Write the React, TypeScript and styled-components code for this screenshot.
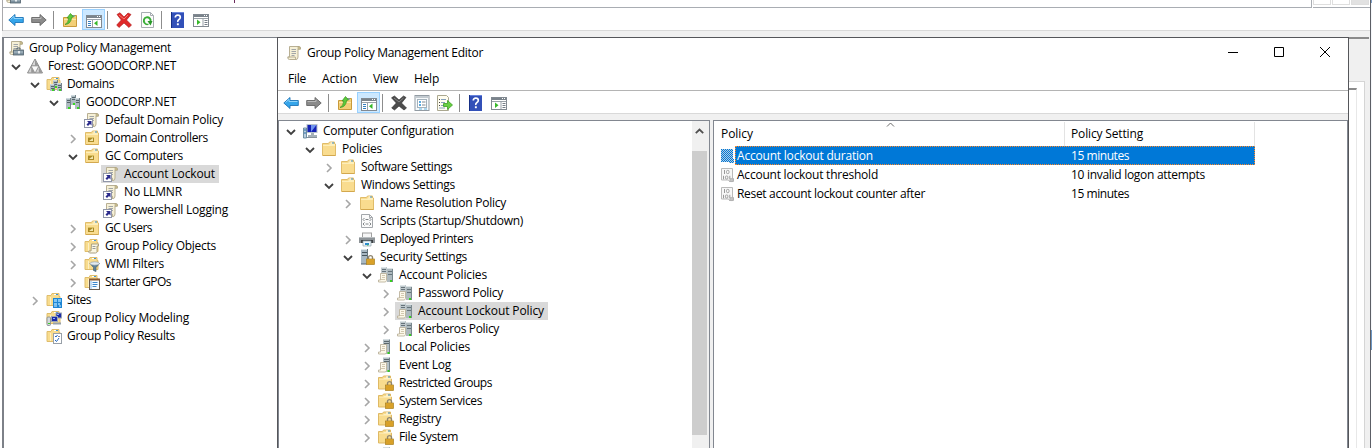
import React, { useLayoutEffect, useRef, useState } from "react";
import styled, { createGlobalStyle, css } from "styled-components";

const GlobalStyle = createGlobalStyle`
  * { box-sizing: border-box; }
  html, body { margin: 0; padding: 0; overflow: hidden; background: #fff; }
  body { font: 12px/18px "Open Sans", "Liberation Sans", sans-serif; color: #000; }
  svg { display: block; flex: none; }
`;

/* ---------- text ---------- */

const Label = styled.span`
  display: inline-block;
  white-space: nowrap;
  flex: none;
`;

/* Text tracked so that it takes the given width in pixels. */
function Text({ children, width }: { children: string; width: number }) {
  const ref = useRef<HTMLSpanElement>(null);
  const [spacing, setSpacing] = useState(0);
  useLayoutEffect(() => {
    const natural = ref.current!.getBoundingClientRect().width;
    setSpacing((width - natural) / children.length);
  }, [children, width]);
  return (
    <Label ref={ref} style={{ letterSpacing: `${spacing}px` }}>
      {children}
    </Label>
  );
}

/* ---------- icons ---------- */

const Svg = ({ children }: { children: React.ReactNode }) => (
  <svg width="16" height="16" viewBox="0 0 16 16">
    {children}
  </svg>
);

const FolderShape = () => (
  <>
    <path d="M1.5 2.5h6l1-1.500h5v2h1v11.500h-13z" fill="#f9dc8f" stroke="#e0bc69" />
    <path d="M2 4h6l1-1h5v2h-12z" fill="#fdeeb9" />
    <path d="M9.5 2h2" stroke="#fff" />
    <path d="M11 2h2" stroke="#3b95dd" />
    <path d="M2 14.5h12.5" stroke="#d3a84e" />
  </>
);
const SmallFolder = () => (
  <>
    <path d="M1 3.5h4l1-2h7v3h1v9H1z" fill="#f8dc8e" stroke="#dfbd6c" />
    <path d="M4.5 5v8" stroke="#fdf0c4" />
    <path d="M8 2.5h2" stroke="#fff" />
    <path d="M10 2.5h2" stroke="#3b95dd" />
  </>
);
const Tower = ({ x, y, h = 10 }: { x: number; y: number; h?: number }) => (
  <>
    <rect x={x} y={y} width="5" height={h} fill="#afbcc2" />
    <path d={`M${x} ${y + 0.5}h5`} stroke="#cfdade" />
    <path d={`M${x + 4.5} ${y}v${h}`} stroke="#75848b" />
    <path d={`M${x + 1} ${y + 2.5}h3M${x + 1} ${y + 4.5}h3`} stroke="#56656b" />
    <rect x={x + 2} y={y + h - 2} width="2" height="2" fill="#39d820" />
  </>
);
const Lock = () => (
  <>
    <path d="M9.5 10V8.6a2 2 0 0 1 4 0V10" fill="none" stroke="#8f8672" strokeWidth="1.4" />
    <rect x="7.5" y="10" width="8" height="5.5" fill="#e8b030" stroke="#a67e20" strokeWidth=".7" />
    <path d="M8 12h7M8 14h7" stroke="#c18a20" strokeWidth=".8" />
  </>
);
const ScrollShape = () => (
  <>
    <path d="M3.5 1.5h9.5q2 0 1.5 2.5H12v8q0 2.500-2 2.500H3.500q-2 0-1.700-2.500H3.500z" fill="#f6f0d6" stroke="#b8af93" />
    <path d="M12 1.5q2.500 0 2.300 2.700H12z" fill="#d8c993" stroke="#a59c7c" strokeWidth=".6" />
    <path d="M1.800 12h7.500q0 2.500 1 2.500" fill="none" stroke="#b8af93" />
    <path d="M5.500 4.500h4.500M5.500 6.500h4.500M5.500 8.500h4.500M5.500 10.500h3" stroke="#a2a6a8" />
  </>
);
const MiniScroll = () => (
  <>
    <path d="M7.500 6h7v2H13v5.500q0 1.500-1.500 1.500h-6q-1-.500-.700-2H7z" fill="#fbf6e1" stroke="#aaa184" />
    <path d="M8.500 8.500h3M8.500 10.500h3" stroke="#979b9c" />
  </>
);

type IconName = keyof typeof icons;
const icons = {
  scroll: () => <Svg><ScrollShape /></Svg>,
  gpm: () => (
    <Svg>
      <ScrollShape />
      <rect x="5.500" y="10" width="10" height="5" fill="#7d919f" stroke="#52626d" strokeWidth=".8" />
      <path d="M9 9.500V8h3v1.500" stroke="#52626d" fill="none" />
      <path d="M6 12h9" stroke="#b3c3cc" />
      <rect x="10" y="11" width="2" height="2.500" fill="#e8edf0" />
    </Svg>
  ),
  forest: () => (
    <Svg>
      <path d="M8 1l3.800 7H4.200z" fill="#d8d8d8" stroke="#777" strokeWidth=".8" />
      <path d="M4.200 8L8 15H.500zM11.800 8l3.700 7H8z" fill="#d2d2d2" stroke="#777" strokeWidth=".8" />
      <path d="M4.200 8h7.600L8 15z" fill="#fafafa" stroke="#8a8a8a" strokeWidth=".6" />
      <path d="M8 1.500v6.300h3.500zM4.200 8.500v6.200h3.300zM11.800 8.500v6.200h3.300z" fill="#989898" />
    </Svg>
  ),
  domains: () => <Svg><SmallFolder /><Tower x={7} y={4} h={8} /><Tower x={4} y={8} h={7} /><Tower x={11} y={7} h={8} /></Svg>,
  domain: () => <Svg><Tower x={6} y={1} /><Tower x={1} y={4} h={11} /><Tower x={10} y={4} h={11} /></Svg>,
  link: () => (
    <Svg>
      <ScrollShape />
      <rect x=".5" y="7.500" width="8" height="8" fill="#fff" stroke="#9096a8" />
      <path d="M3 9h4.500v4.500L6 12l-2 2-1.500-1.500 2-2z" fill="#2a2a8c" />
    </Svg>
  ),
  ou: () => (
    <Svg>
      <FolderShape />
      <rect x="4" y="7" width="6" height="5" fill="#ab8a25" />
      <path d="M5 11l4-3v3z" fill="#f0e5ae" />
      <path d="M4 7.500h6" stroke="#d7bf62" />
    </Svg>
  ),
  gpos: () => <Svg><SmallFolder /><MiniScroll /></Svg>,
  wmi: () => (
    <Svg>
      <SmallFolder />
      <path d="M6 7.500h9.500l-3.500 4v4l-2.500-1v-3z" fill="#5d8198" stroke="#4c6270" strokeWidth=".7" />
      <ellipse cx="10.700" cy="7.500" rx="4.700" ry="1.700" fill="#e2eaf0" stroke="#8796a0" strokeWidth=".6" />
    </Svg>
  ),
  starter: () => (
    <Svg>
      <SmallFolder />
      <rect x="5.500" y="5.500" width="10" height="10" fill="#f7fbff" stroke="#6a5c50" />
      <path d="M5 5.500h11" stroke="#8c5a34" strokeWidth="2" />
      <path d="M8.500 8.500h5M8.500 10.500h5M8.500 12.500h4" stroke="#3c86cc" />
      <path d="M7 7v8" stroke="#8db9e2" />
    </Svg>
  ),
  sites: () => (
    <Svg>
      <SmallFolder />
      <rect x="7" y="6" width="9" height="10" fill="#1e86d4" />
      <path d="M8 7h3v3H8zM12 7h3v3h-3zM8 11h3v2H8zM12 11h2v2h-2z" fill="#7fc6f5" />
      <path d="M13 14h2M8 14h3" stroke="#d7efff" />
    </Svg>
  ),
  modeling: () => (
    <Svg>
      <SmallFolder />
      <rect x="1" y="7" width="3.500" height="8.500" rx="1" fill="#d4d9dc" stroke="#7c8488" strokeWidth=".8" />
      <rect x="10" y="3" width="5.500" height="5" fill="#1b2aa8" stroke="#9ba5b5" />
      <rect x="5.500" y="6.500" width="6" height="5" fill="#1b2aa8" stroke="#9ba5b5" />
      <path d="M7 13.500h8" stroke="#98a1a8" strokeWidth="2" />
      <path d="M11 4.500h2M7 8.500h2" stroke="#8fb0f8" />
      <path d="M2 13.500h2" stroke="#3bcf2a" />
    </Svg>
  ),
  results: () => (
    <Svg>
      <SmallFolder />
      <rect x="7.500" y="5.500" width="8" height="10" fill="#fff" stroke="#98a0a8" />
      <path d="M9 8l1 1 1.500-2M9 12l1.500 1.500L13 10" stroke="#2468c2" fill="none" />
      <path d="M12 8.500h2" stroke="#889" />
    </Svg>
  ),
  folder: () => <Svg><FolderShape /></Svg>,
  computer: () => (
    <Svg>
      <rect x="5" y="1.500" width="10" height="8" fill="#1420b4" stroke="#b9c3cc" />
      <path d="M9 9V2h5.500z" fill="#6f93ee" />
      <path d="M9 10h3v2h3v2H6v-2h3z" fill="#a4b0b8" />
      <path d="M1.500 5h3v10h-3z" fill="#bccfdf" stroke="#54788f" strokeWidth=".8" />
      <path d="M2 7h2M2 10h2" stroke="#2a6ca5" />
      <path d="M5 14.500h10" stroke="#87929a" />
    </Svg>
  ),
  script: () => (
    <Svg>
      <path d="M2.500 1.500h8l3 3v10h-11z" fill="#fbfbfb" stroke="#a3a7ab" />
      <path d="M10.500 1.500v3h3" fill="none" stroke="#a3a7ab" />
      <path d="M5.500 5L4 6.500 5.500 8M10.500 5L12 6.500 10.500 8M6.500 6.500h3M5.500 9.500L4 11l1.500 1.500M10.500 9.500L12 11l-1.500 1.500M6.500 11h3" fill="none" stroke="#73787c" strokeWidth=".9" />
    </Svg>
  ),
  printer: () => (
    <Svg>
      <rect x="3.500" y="2" width="9" height="5" fill="#f6f6f6" stroke="#a0a0a0" />
      <path d="M0 6h16v6H0z" fill="#8d9397" />
      <path d="M0 6.500h16" stroke="#b8bdc0" />
      <path d="M2 9h12v3H2z" fill="#3c4043" />
      <path d="M4 10h8v5H4z" fill="#eef6fb" stroke="#8da0ab" strokeWidth=".7" />
      <path d="M6 13h4" stroke="#2a8ad0" strokeWidth="2" />
      <path d="M8 14h1.500" stroke="#3cb64c" />
    </Svg>
  ),
  security: () => (
    <Svg>
      <rect x="2" y="0" width="7" height="15" fill="#a8b8c3" />
      <path d="M2 .5h7" stroke="#dbe5ea" />
      <path d="M3 3.500h5M3 6.500h5" stroke="#45545d" />
      <path d="M8.500 0v15" stroke="#67777f" />
      <path d="M2 15h6" stroke="#54636b" />
      <Lock />
    </Svg>
  ),
  policies: () => (
    <Svg>
      <rect x="3" y="0" width="6" height="13" fill="#c0c9cd" />
      <rect x="9" y="1" width="6" height="14" fill="#adb9be" />
      <path d="M3 .5h5M9 1.500h6" stroke="#dde4e6" />
      <path d="M4 2.500h4M4 4.500h4M10 4.500h4M10 7.500h4" stroke="#66737a" />
      <path d="M14.500 2v13" stroke="#7a888e" />
      <path d="M12 13h2v2h-2z" fill="#35d11c" />
      <path d="M2.500 6.500h6v7l-1 1.500h-7v-2h2z" fill="#fcf8ea" stroke="#b5ab93" strokeWidth=".8" />
      <path d="M4 8.500h3M4 10.500h3M3 12.500h4" stroke="#c6bb9f" strokeWidth=".8" />
    </Svg>
  ),
  policy: () => (
    <Svg>
      <rect x="5" y="0" width="7" height="15" fill="#b4c0c5" />
      <path d="M5 .5h6" stroke="#d6dee1" />
      <path d="M6 2.500h5M6 4.500h5" stroke="#5a676d" />
      <path d="M11.500 1v14" stroke="#75848a" />
      <path d="M9.500 13h2v2h-2z" fill="#35d11c" />
      <path d="M2.500 5.500h6v8l-1 1.500h-7v-2h2z" fill="#fcf8ea" stroke="#b5ab93" strokeWidth=".8" />
      <path d="M4 7.500h3M4 9.500h3M3 11.500h4" stroke="#c6bb9f" strokeWidth=".8" />
    </Svg>
  ),
  locked: () => (
    <Svg>
      <path d="M.5 2.500h4l1-1.500h7v3h1v10H.5z" fill="#f8dc8e" stroke="#dfb964" />
      <path d="M1 4h4l1-1h7v1.500H1z" fill="#fdf0c4" />
      <path d="M8 2h2" stroke="#fff" />
      <path d="M10 2h2" stroke="#3b95dd" />
      <Lock />
    </Svg>
  ),
  back: () => (
    <Svg>
      <path d="M.8 8L7 2.500v3h8.300v5H7v3z" fill="#35a5ea" stroke="#1d74b8" strokeWidth=".9" />
      <path d="M2.500 7.500L6 4.300v2.200h8.500" fill="none" stroke="#8fd3fa" />
    </Svg>
  ),
  forward: () => (
    <Svg>
      <path d="M15.200 8L9 2.500v3H.7v5H9v3z" fill="#8b8b8b" stroke="#666" strokeWidth=".9" />
      <path d="M1.500 6.500H10V4.600" fill="none" stroke="#b9b9b9" />
    </Svg>
  ),
  up: () => (
    <Svg>
      <path d="M1.500 5.500h6l1-2h6v11h-13z" fill="#f3cf77" stroke="#c99a3a" />
      <path d="M2 7.500h12" stroke="#fbe6a6" />
      <path d="M10 4h3" stroke="#4c9fe0" />
      <path d="M3 12.500q3.500-1.500 3.800-6.500H5l3.500-4.500L11.500 5 9.600 5.400Q9 12 3 12.500z" fill="#5ccb3c" stroke="#37931f" strokeWidth=".7" />
    </Svg>
  ),
  tree: () => (
    <Svg>
      <rect x=".5" y="2.500" width="15" height="12" fill="#fff" stroke="#818991" />
      <path d="M1 4h14" stroke="#7a838b" strokeWidth="2" />
      <path d="M11 3.500h1M13 3.500h1" stroke="#fff" />
      <path d="M1 6.500h14M6.500 6v8" stroke="#9aa2a9" />
      <path d="M2 8.500h3M2 10.500h3M2 12.500h3" stroke="#337fc0" />
      <path d="M11.500 7.500v5.500L8 10.200z" fill="#37b82a" />
    </Svg>
  ),
  action: () => (
    <Svg>
      <rect x=".5" y="2.500" width="15" height="12" fill="#fff" stroke="#818991" />
      <path d="M1 4h14" stroke="#7a838b" strokeWidth="2" />
      <path d="M11 3.500h1M13 3.500h1" stroke="#fff" />
      <path d="M1 6.500h14M10 6v8" stroke="#9aa2a9" />
      <path d="M11.500 8.500h3M11.500 10.500h3M11.500 12.500h3" stroke="#747d86" />
      <path d="M4 7.500v5.500l3.500-2.800z" fill="#37b82a" />
    </Svg>
  ),
  remove: () => (
    <Svg>
      <path d="M1 2.500L4 .7 8 5l4-4 3 1.500L10.500 8l5 5-2.500 2.500L8 11l-5 4.500L.7 13 5.300 8z" fill="#e02a2a" stroke="#a81414" strokeWidth=".6" />
      <path d="M3 3l5 4 4-4" fill="none" stroke="#f27a70" />
    </Svg>
  ),
  removeDark: () => (
    <Svg>
      <path d="M.5 2.800L3.500 1 8 5l4.500-4L15 2.500 10.500 8l5 5-2.500 2L8 11l-4.500 4L.7 13 5.300 8z" fill="#4c4c4c" stroke="#292929" strokeWidth=".6" />
      <path d="M3 3l5 4 4.500-4" fill="none" stroke="#858585" />
    </Svg>
  ),
  refresh: () => (
    <Svg>
      <path d="M2.500.5h9l3 3v12h-12z" fill="#fcfcfc" stroke="#a7adb2" />
      <path d="M11.500.5v3h3" fill="none" stroke="#a7adb2" />
      <path d="M5.800 11A3.400 3.400 0 1 1 11.500 9.500" fill="none" stroke="#38ad35" strokeWidth="1.900" />
      <path d="M8.500 9h5l-2 4.500z" fill="#279626" />
      <path d="M5.500 11q1.500 2 4 1.200" fill="none" stroke="#38ad35" strokeWidth="1.400" />
    </Svg>
  ),
  props: () => (
    <Svg>
      <rect x="1" y=".5" width="14" height="15" fill="#f6f9fb" stroke="#929ba3" />
      <path d="M2 2h12" stroke="#c3cbd1" strokeWidth="2" />
      <rect x="3.500" y="4.500" width="9" height="8" fill="#fff" stroke="#a4b2bc" />
      <path d="M5 7h2M5 10h2" stroke="#268fd6" strokeWidth="1.600" />
      <path d="M8 7h3.500M8 10h3.500" stroke="#7e8991" />
      <path d="M5 14h3M10 14h3" stroke="#65b5e0" />
    </Svg>
  ),
  export: () => (
    <Svg>
      <path d="M.5.5h9l2 2v13H.5z" fill="#fffdf0" stroke="#aaa78f" />
      <path d="M2 4.500h1M2 7.500h1M2 10.500h1" stroke="#444" />
      <path d="M4 4.500h5M4 7.500h4M4 10.500h4M2 13h6" stroke="#86a1bd" />
      <path d="M6.500 8.500h4v-3L15.500 10l-5 4.500v-3h-4z" fill="#67cf42" stroke="#3b9d22" strokeWidth=".8" />
    </Svg>
  ),
  help: () => (
    <Svg>
      <rect x="1" y="0" width="13" height="16" fill="#3250b8" />
      <path d="M1.500 0v16" stroke="#162f86" />
      <path d="M2 .5h12" stroke="#6884dc" />
      <path d="M5.300 5.500q0-2.300 2.500-2.300t2.500 2.100q0 1.500-1.400 2.300T7.800 10" fill="none" stroke="#fff" strokeWidth="1.700" />
      <rect x="6.900" y="11.300" width="1.900" height="1.900" fill="#fff" />
    </Svg>
  ),
  setting: () => (
    <Svg>
      <path d="M1.500 1.500h11v10h1v3h-4l-1-1.500h-7z" fill="#f7f7f7" stroke="#b9b9b9" />
      <path d="M10.500 11.500q3-1 3 1.500t-4 1.500z" fill="#c4c4c4" stroke="#aaa" strokeWidth=".6" />
      <path d="M4.500 3v4M3.500 8.800v3.500M9.800 8.800v3.500" stroke="#9a9a9a" />
      <rect x="6.500" y="3.400" width="2.500" height="3.200" rx="1" fill="none" stroke="#9a9a9a" strokeWidth=".9" />
      <rect x="5.400" y="9" width="2.500" height="3" rx="1" fill="none" stroke="#9a9a9a" strokeWidth=".9" />
    </Svg>
  ),
  settingSelected: () => (
    <Svg>
      <defs>
        <pattern id="dither" width="2" height="2" patternUnits="userSpaceOnUse">
          <rect width="2" height="2" fill="#b4cde2" />
          <rect width="1" height="1" fill="#0078d7" />
          <rect x="1" y="1" width="1" height="1" fill="#0078d7" />
        </pattern>
      </defs>
      <path d="M1 1h12v10h1v4H9v-1H1z" fill="url(#dither)" shapeRendering="crispEdges" />
    </Svg>
  ),
};
const Icon = ({ name }: { name: IconName }) => icons[name]();

/* ---------- tree ---------- */

interface Node {
  level: number;
  icon: IconName;
  text?: string;
  width?: number;
  state?: "open" | "closed";
  selected?: boolean;
}

const TreeRow = styled.div<{ $level: number }>`
  display: flex;
  height: 18px;
  padding-left: ${(p) => p.$level * 19}px;
`;
const Twisty = styled.span`
  width: 19px;
  flex: none;
  display: flex;
  align-items: center;
  padding: 1px 0 0 5px;
`;
const Item = styled.span<{ $selected?: boolean }>`
  display: flex;
  align-items: center;
  gap: 5px;
  height: 18px;
  padding: 0 4px 0 2px;
  background: ${(p) => (p.$selected ? "#d9d9d9" : "transparent")};
`;

const Tree = ({ nodes }: { nodes: Node[] }) => (
  <>
    {nodes.map((n, i) => (
      <TreeRow key={i} $level={n.level}>
        <Twisty>
          {n.state === "open" && (
            <svg width="10" height="10" viewBox="0 0 10 10">
              <path d="M1 3l4 4 4-4" fill="none" stroke="#404040" strokeWidth="1.800" />
            </svg>
          )}
          {n.state === "closed" && (
            <svg width="10" height="10" viewBox="0 0 10 10">
              <path d="M3 1l4 4-4 4" fill="none" stroke="#a6a6a6" strokeWidth="1.600" />
            </svg>
          )}
        </Twisty>
        <Item $selected={n.selected}>
          <Icon name={n.icon} />
          {n.text && <Text width={n.width!}>{n.text}</Text>}
        </Item>
      </TreeRow>
    ))}
  </>
);

const consoleNodes: Node[] = [
  { level: 0, icon: "forest", text: "Forest: GOODCORP.NET", width: 128, state: "open" },
  { level: 1, icon: "domains", text: "Domains", width: 47, state: "open" },
  { level: 2, icon: "domain", text: "GOODCORP.NET", width: 90, state: "open" },
  { level: 3, icon: "link", text: "Default Domain Policy", width: 118 },
  { level: 3, icon: "ou", text: "Domain Controllers", width: 103, state: "closed" },
  { level: 3, icon: "ou", text: "GC Computers", width: 78, state: "open" },
  { level: 4, icon: "link", text: "Account Lockout", width: 91, selected: true },
  { level: 4, icon: "link", text: "No LLMNR", width: 58 },
  { level: 4, icon: "link", text: "Powershell Logging", width: 104 },
  { level: 3, icon: "ou", text: "GC Users", width: 47, state: "closed" },
  { level: 3, icon: "gpos", text: "Group Policy Objects", width: 111, state: "closed" },
  { level: 3, icon: "wmi", text: "WMI Filters", width: 59, state: "closed" },
  { level: 3, icon: "starter", text: "Starter GPOs", width: 66, state: "closed" },
  { level: 1, icon: "sites", text: "Sites", width: 24, state: "closed" },
  { level: 1, icon: "modeling", text: "Group Policy Modeling", width: 122 },
  { level: 1, icon: "results", text: "Group Policy Results", width: 108 },
];

const editorNodes: Node[] = [
  { level: 0, icon: "computer", text: "Computer Configuration", width: 131, state: "open" },
  { level: 1, icon: "folder", text: "Policies", width: 40, state: "open" },
  { level: 2, icon: "folder", text: "Software Settings", width: 91, state: "closed" },
  { level: 2, icon: "folder", text: "Windows Settings", width: 94, state: "open" },
  { level: 3, icon: "folder", text: "Name Resolution Policy", width: 126, state: "closed" },
  { level: 3, icon: "script", text: "Scripts (Startup/Shutdown)", width: 143 },
  { level: 3, icon: "printer", text: "Deployed Printers", width: 93, state: "closed" },
  { level: 3, icon: "security", text: "Security Settings", width: 87, state: "open" },
  { level: 4, icon: "policies", text: "Account Policies", width: 88, state: "open" },
  { level: 5, icon: "policies", text: "Password Policy", width: 85, state: "closed" },
  { level: 5, icon: "policies", text: "Account Lockout Policy", width: 126, state: "closed", selected: true },
  { level: 5, icon: "policies", text: "Kerberos Policy", width: 81, state: "closed" },
  { level: 4, icon: "policy", text: "Local Policies", width: 71, state: "closed" },
  { level: 4, icon: "policy", text: "Event Log", width: 52, state: "closed" },
  { level: 4, icon: "locked", text: "Restricted Groups", width: 93, state: "closed" },
  { level: 4, icon: "locked", text: "System Services", width: 83, state: "closed" },
  { level: 4, icon: "locked", text: "Registry", width: 42, state: "closed" },
  { level: 4, icon: "locked", text: "File System", width: 59, state: "closed" },
  { level: 4, icon: "policy" },
];

/* ---------- toolbar ---------- */

const ToolbarRow = styled.div`
  display: flex;
  height: 23px;
  padding-left: 2px;
  border-bottom: 1px solid #d9d9d9;
  background: #fff;
  flex: none;
`;
const ToolButton = styled.span<{ $on?: boolean }>`
  width: 23px;
  height: 22px;
  padding: 4px 0 0 3px;
  ${(p) =>
    p.$on &&
    css`
      padding: 3px 0 0 3px;
      margin-top: 1px;
      height: 21px;
      background: #cce8ff;
      border: 1px solid #99d1ff;
    `}
`;
const Separator = styled.span`
  width: 8px;
  height: 18px;
  margin-top: 3px;
  padding-left: 2px;
  &::before {
    content: "";
    display: block;
    width: 1px;
    height: 100%;
    background: #8d8d8d;
  }
`;
const Toolbar = ({ items }: { items: (IconName | "|")[] }) => (
  <ToolbarRow>
    {items.map((it, i) =>
      it === "|" ? (
        <Separator key={i} />
      ) : (
        <ToolButton key={i} $on={it === "tree"}>
          <Icon name={it} />
        </ToolButton>
      )
    )}
  </ToolbarRow>
);

/* ---------- console window ---------- */

const Desktop = styled.div`
  position: relative;
  display: flex;
  width: 1372px;
  height: 448px;
  overflow: hidden;
  background: #fff;
`;
const Console = styled.div`
  display: flex;
  flex-direction: column;
  width: 1369px;
  margin-left: 2px;
  border-left: 1px solid #a9a9ad;
`;
const MenuStrip = styled.div`
  display: flex;
  height: 8px;
  flex: none;
`;
const MenuBand = styled.div`
  display: flex;
  gap: 213px;
  width: 1309px;
  padding-left: 2px;
  border-bottom: 1px solid #a9adb3;
  border-right: 1px solid #a9adb3;
`;
const ClippedIcon = styled.span`
  display: flex;
  align-items: flex-end;
  width: 16px;
  height: 4px;
  overflow: hidden;
`;
const Descender = styled.i`
  width: 1px;
  height: 3px;
  background: #6b2a5c;
`;
const ChildButtons = styled.div`
  display: flex;
  gap: 1px;
  flex: 1;
  margin-left: 1px;
  border-bottom: 1px solid #a9adb3;
`;
const ChildButton = styled.span<{ $filled?: boolean }>`
  width: 18px;
  height: 5px;
  border: solid #dedede;
  border-width: 0 1px 1px;
  background: ${(p) => (p.$filled ? "#e2e2e2" : "#fff")};
`;
const ConsoleBody = styled.div`
  display: flex;
  flex: 1;
  margin-left: -1px;
  padding-top: 6px;
  background: #f0f0f0;
`;
const ConsoleTree = styled.div`
  width: 276px;
  flex: none;
  padding: 1px 0 0 2px;
  border: solid #7d8188;
  border-width: 1px 0 0 2px;
  background: #fff;
`;
const RootRow = styled.div`
  display: flex;
  height: 18px;
`;
const ConsoleResult = styled.div`
  flex: 1;
  margin-right: 2px;
  padding-top: 42px;
  padding-right: 4px;
  border-top: 2px solid #8a8a8a;
`;
const ResultFrame = styled.div`
  height: 100%;
  padding: 6px 7px 0 0;
  border: solid #d5d5d5;
  border-width: 1px 1px 0 0;
  background: #fff;
`;
const ResultInner = styled.div`
  height: 100%;
  border-top: 2px solid #8a8a8a;
  border-right: 1px solid #e8e8e8;
`;
const FarEdge = styled.div`
  display: flex;
  flex-direction: column;
  width: 2px;
  margin-left: -1px;
  border-left: 1px solid #5c5f66;
  background: #fff;
`;
const FarPatch = styled.i<{ $h: number; $c: string }>`
  height: ${(p) => p.$h}px;
  background: ${(p) => p.$c};
`;

/* ---------- editor window ---------- */

const Editor = styled.div`
  position: absolute;
  left: 277px;
  top: 37px;
  width: 1072px;
  height: 420px;
  display: flex;
  flex-direction: column;
  background: #fff;
  border: 1px solid #55565a;
`;
const TitleBar = styled.div`
  display: flex;
  align-items: center;
  height: 30px;
  padding-left: 8px;
  gap: 5px;
  flex: none;
`;
const WindowButtons = styled.div`
  display: flex;
  gap: 36px;
  margin-left: auto;
  padding-right: 18px;
  margin-top: -2px;
`;
const MenuBar = styled.div`
  display: flex;
  gap: 16px;
  height: 23px;
  padding: 2px 0 0 10px;
  border-bottom: 1px solid #b4b4b4;
  flex: none;
`;
const EditorBody = styled.div`
  display: flex;
  gap: 3px;
  flex: 1;
  min-height: 0;
  padding-top: 6px;
  background: #f0f0f0;
`;
const TreePane = styled.div`
  display: flex;
  width: 432px;
  border: solid #828790;
  border-width: 1px 1px 0 1px;
  background: #fff;
`;
const TreeScroll = styled.div`
  flex: 1;
  min-width: 0;
  padding: 1px 0 0 2px;
  overflow: hidden;
`;
const ScrollBar = styled.div`
  width: 17px;
  padding-right: 2px;
  background: #f0f0f0;
`;
const ScrollUp = styled.div`
  display: flex;
  justify-content: center;
  padding-top: 6px;
  height: 30px;
`;
const Thumb = styled.div`
  height: 284px;
  background: #cdcdcd;
`;
const ListPane = styled.div`
  flex: 1;
  border: solid #828790;
  border-width: 1px 1px 0 1px;
  background: #fff;
`;
const ListHeader = styled.div`
  display: flex;
  height: 25px;
  padding-top: 1px;
`;
const HeaderCell = styled.div<{ $w: number; $pad: number }>`
  width: ${(p) => p.$w}px;
  padding: 3px 0 0 ${(p) => p.$pad}px;
  border-right: 1px solid #e3e3e3;
  position: relative;
`;
const SortMark = styled.span`
  position: absolute;
  left: 172px;
  top: 0;
`;
const ListRow = styled.div`
  display: flex;
  align-items: center;
  height: 19px;
  padding-left: 6px;
`;
const RowFields = styled.div<{ $selected?: boolean }>`
  display: flex;
  align-items: center;
  width: 520px;
  height: 19px;
  margin-left: -1px;
  padding-top: 1px;
  ${(p) =>
    p.$selected &&
    css`
      color: #fff;
      background: #0078d7;
      outline: 1px dotted #ff8728;
      outline-offset: -1px;
    `}
`;
const Cell = styled.span<{ $w: number }>`
  width: ${(p) => p.$w}px;
  padding-left: 2px;
`;

const settings = [
  { name: "Account lockout duration", w: 136, value: "15 minutes", vw: 58 },
  { name: "Account lockout threshold", w: 141, value: "10 invalid logon attempts", vw: 134 },
  { name: "Reset account lockout counter after", w: 188, value: "15 minutes", vw: 58 },
];

export default function App() {
  return (
    <Desktop>
      <GlobalStyle />
      <Console>
        <MenuStrip>
          <MenuBand>
            <ClippedIcon><Icon name="gpm" /></ClippedIcon>
            <Descender />
          </MenuBand>
          <ChildButtons>
            <ChildButton />
            <ChildButton />
            <ChildButton $filled />
          </ChildButtons>
        </MenuStrip>
        <Toolbar items={["back", "forward", "|", "up", "tree", "|", "remove", "refresh", "|", "help", "action"]} />
        <ConsoleBody>
          <ConsoleTree>
            <RootRow>
              <Item>
                <Icon name="gpm" />
                <Text width={142}>Group Policy Management</Text>
              </Item>
            </RootRow>
            <Tree nodes={consoleNodes} />
          </ConsoleTree>
          <ConsoleResult>
            <ResultFrame>
              <ResultInner />
            </ResultFrame>
          </ConsoleResult>
        </ConsoleBody>
      </Console>
      <FarEdge>
        <FarPatch $h={3} $c="#7f9fc8" />
        <FarPatch $h={327} $c="#f4f6f9" />
        <FarPatch $h={20} $c="#6d97c4" />
      </FarEdge>

      <Editor>
        <TitleBar>
          <Icon name="scroll" />
          <Text width={176}>Group Policy Management Editor</Text>
          <WindowButtons>
            <svg width="10" height="10" viewBox="0 0 10 10"><path d="M0 5.500h10" stroke="#000" /></svg>
            <svg width="10" height="10" viewBox="0 0 10 10"><path d="M.5.5h9v9h-9z" fill="none" stroke="#000" /></svg>
            <svg width="10" height="10" viewBox="0 0 10 10"><path d="M0 0l10 10M10 0L0 10" stroke="#000" /></svg>
          </WindowButtons>
        </TitleBar>
        <MenuBar>
          <Text width={18}>File</Text>
          <Text width={35}>Action</Text>
          <Text width={25}>View</Text>
          <Text width={25}>Help</Text>
        </MenuBar>
        <Toolbar items={["back", "forward", "|", "up", "tree", "|", "removeDark", "props", "export", "|", "help", "action"]} />
        <EditorBody>
          <TreePane>
            <TreeScroll>
              <Tree nodes={editorNodes} />
            </TreeScroll>
            <ScrollBar>
              <ScrollUp>
                <svg width="9" height="9" viewBox="0 0 9 9"><path d="M.8 6.200L4.500 2.500l3.700 3.700" fill="none" stroke="#505050" strokeWidth="1.800" /></svg>
              </ScrollUp>
              <Thumb />
            </ScrollBar>
          </TreePane>
          <ListPane>
            <ListHeader>
              <HeaderCell $w={351} $pad={7}>
                <SortMark>
                  <svg width="9" height="5" viewBox="0 0 9 5"><path d="M1 4.500l3.500-3.500L8 4.500" fill="none" stroke="#6a6a6a" /></svg>
                </SortMark>
                <Text width={32}>Policy</Text>
              </HeaderCell>
              <HeaderCell $w={190} $pad={6}>
                <Text width={72}>Policy Setting</Text>
              </HeaderCell>
            </ListHeader>
            {settings.map((s, i) => (
              <ListRow key={s.name}>
                <Icon name={i === 0 ? "settingSelected" : "setting"} />
                <RowFields $selected={i === 0}>
                  <Cell $w={334}><Text width={s.w}>{s.name}</Text></Cell>
                  <Cell $w={180}><Text width={s.vw}>{s.value}</Text></Cell>
                </RowFields>
              </ListRow>
            ))}
          </ListPane>
        </EditorBody>
      </Editor>
    </Desktop>
  );
}
